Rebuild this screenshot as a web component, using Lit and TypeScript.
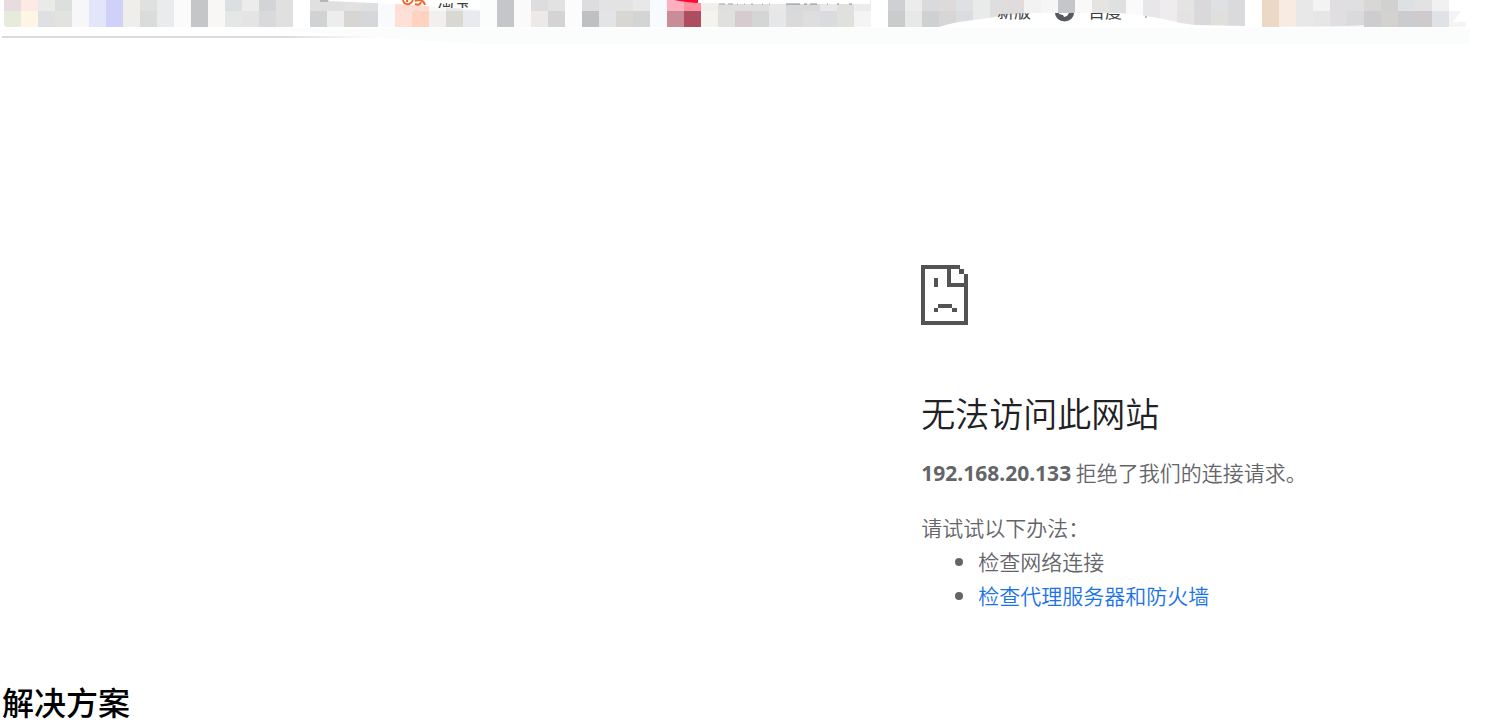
import { LitElement, html, css, svg } from "lit";
import { customElement } from "lit/decorators.js";

// Mosaic columns, one per 17px: "top/bottom", or a single colour for both rows.
const MOSAIC = (
  "e8dcde/e5ecdc fdeae5/fef5e5 e9ebe8/dfe0e1 dbdfdd/e2e3df f7f7fa e3e6fa d0d1f8 efeeea e0e0df/dadbdb e9ebed fbfbfb c5c6c8 f8f7f5 " +
  "dcdfe2/e4e7e6 eeecea/e4e4e4 d2d4d7/d9d9dc e0e0e1 ffffff e0e0df/d0d2d4 e0e0e0/ededee e2e2e2/d7d6d2 dddfe0/d6d7da f8fafc " +
  "fff1ee/ffe0d9 ffe1d6/ffd3c0 f7f7f7/f2f0ef e8e8e6/d9d8d3 f2f3f6/e8eaf0 fbfcfc c5c6c9 fafafa dddddf/ece9e6 e2e2e3/d4d4d5 fcfcfc " +
  "dddddf/bfc0c2 e3e3e4/e3e4e6 e3e3e3/d8d7d2 e8e8e8/d3d4d4 f8fbfe ffb0bf/c98c98 ff91a3/ac4e60 f1efeb/f4f3f0 dfdfdf/e0e0dd " +
  "dfdfdf/d6cccf dfdfdf/d4d6d6 e8e8e8/e5e7e9 d8d9da/dadada d9d9da/dededf e8e8e8/dadbdf e0e0df/e0e0dd ececec/f4f4f4 ffffff " +
  "cfd0d3/cacbcd ececec/e8e8e9 dadadc/cfd0d2 dedada/d8d5d6 dfe0e3/d9dde0 e8ebea e0dddf e0dcde f2f2f2 f6f6f6 c5c6c9 f9f9f8 e5e4e0 " +
  "dee1e0 fafafa e7e7e9 eeecec e4e4e4/e4e3e2 d9d9dc dde1e3/dfdfdc dadadd ffffff ecd9c5 f8ece2 e8e8e8 f3f3f3/e6e6e6 e1dee1 " +
  "dedfde/dadadd d8d7d5/cdcdd0 d0d2d1/d3d2ce dde1e4/cbccd0 e2e2e2/cfcbcd f1f1f1/dfe3e7"
)
  .split(" ")
  .map((c) => c.split("/"));

@customElement("bookmark-strip")
export class BookmarkStrip extends LitElement {
  static styles = css`
    :host {
      display: block;
    }
    .strip {
      display: block;
      width: 100%;
      height: auto;
    }
    .label {
      font: 17px "Noto Sans CJK SC", sans-serif;
      fill: #3c4043;
    }
  `;

  render() {
    return html`
      <svg class="strip" viewBox="0 0 1486 46" aria-label="书签栏">
        <defs>
          <linearGradient id="fade">
            <stop offset="0.75" stop-color="#d9dcdf" />
            <stop offset="1" stop-color="#d9dcdf" stop-opacity="0" />
          </linearGradient>
          <clipPath id="low"><rect x="430" y="3" width="60" height="5" /></clipPath>
          <clipPath id="arch"><path d="M980 17L1000 14L1040 13H1110L1180 16V28H980Z" /></clipPath>
        </defs>
        <path d="M250 28H1470V44H480L380 38Z" fill="#fbfdfc" />
        <rect x="2" y="36" width="376" height="2" fill="url(#fade)" />
        <g shape-rendering="crispEdges">
          ${MOSAIC.map(
            ([top, bottom], i) => svg`
              <rect x=${4 + 17 * i} y="0" width="17" height="11" fill=${"#" + top} />
              <rect x=${4 + 17 * i} y="11" width="17" height="16" fill=${"#" + (bottom ?? top)} />`
          )}
        </g>
        <path d="M1449 11H1461L1453 22H1466V27H1449Z" fill="#f4f4f4" />
        <path d="M4 24Q4 27 8 27V28H3V24Z" fill="#fff" />
        <path d="M329 0H480V10L440 7L395 4L329 1Z" fill="#fff" />
        <path d="M320 1H328" stroke="#8b8e91" />
        <path d="M395 4L429 6V11H395Z" fill="#ffddd4" />
        <path d="M403 0Q404 5 409 4Q412 3 413 0M407 0V2M415 1Q423 -2 425 5M415 4Q420 6 421 2" fill="none" stroke="#f5652a" stroke-width="2" />
        <text class="label" x="437" y="8" clip-path="url(#low)">淘宝</text>
        <path d="M698 0H870V4H718V3H698Z" fill="#fff" />
        <path d="M674 0H698V3Q684 2 674 0Z" fill="#ff0a35" />
        <path d="M719 4H725M728 4H733M737 4H738M744 4H745M751 4H753M762 4H763M769 4H770" stroke="#9a9da0" stroke-width="1" />
        <path d="M786 4H800M804 4H807M810 4H817M827 4H828M837 4H839M849 4H852" stroke="#85888c" stroke-width="1" />
        <path d="M936 28Q952 22 975 20Q1005 14 1035 13H1120Q1160 17 1180 23L1195 25L1245 26V28Z" fill="#fff" />
        <path d="M1262 27L1345 26L1364 25V28H1262Z" fill="#fff" opacity="0.7" />
        <g clip-path="url(#arch)">
          <text class="label" x="997" y="18">新版</text>
          <text class="label" x="1088" y="18">百度</text>
          <path d="M1055 13A9 8 0 0 0 1074 13H1069L1067 16L1064 17L1063 15L1059 14V13Z" fill="#55585c" />
          <path d="M1145 17H1147" stroke="#75777a" />
        </g>
      </svg>
    `;
  }
}

@customElement("app-root")
export class AppRoot extends LitElement {
  static styles = css`
    :host {
      display: block;
      background: #fff;
      font-family: "Noto Sans CJK SC", sans-serif;
    }
    .error {
      margin-left: 62%;
      padding-top: 219px;
      color: #646569;
      font-size: 21px;
      font-weight: 350;
      line-height: 34px;
    }
    .icon {
      display: block;
      width: 48px;
      height: 60px;
    }
    .title {
      margin: 63px 0 0;
      color: #202124;
      font-size: 34px;
      font-weight: 350;
      line-height: 50px;
    }
    .text {
      margin: 17px 0 0;
    }
    .host {
      font-family: "Noto Sans", sans-serif;
      font-weight: 700;
    }
    .hint {
      margin: 20px 0 0;
    }
    .list {
      margin: 0;
      padding-left: 57px;
    }
    .link {
      color: #1a73e8;
      text-decoration: none;
    }
    .solution {
      margin: 69px 0 0 2px;
      color: #000;
      font-size: 32px;
      font-weight: 500;
      line-height: 40px;
    }
  `;

  render() {
    return html`
      <bookmark-strip></bookmark-strip>
      <main>
        <section class="error">
          <svg class="icon" viewBox="0 0 48 60" fill="#535353" aria-hidden="true">
            <path
              fill-rule="evenodd"
              d="M0 0H39V4H43V9H47V60H0ZM4 4V56H43V22H26V4ZM30 4V18H43V9H38V4Z"
            />
            <path d="M13 13H17V22H13ZM17 39H31V43H17ZM13 43H17V47H13ZM31 43H36V47H31Z" />
          </svg>
          <h1 class="title">无法访问此网站</h1>
          <p class="text"><strong class="host">192.168.20.133</strong> 拒绝了我们的连接请求。</p>
          <p class="hint">请试试以下办法：</p>
          <ul class="list">
            <li>检查网络连接</li>
            <li><a class="link" href="#proxy">检查代理服务器和防火墙</a></li>
          </ul>
        </section>
        <h2 class="solution">解决方案</h2>
      </main>
    `;
  }
}
